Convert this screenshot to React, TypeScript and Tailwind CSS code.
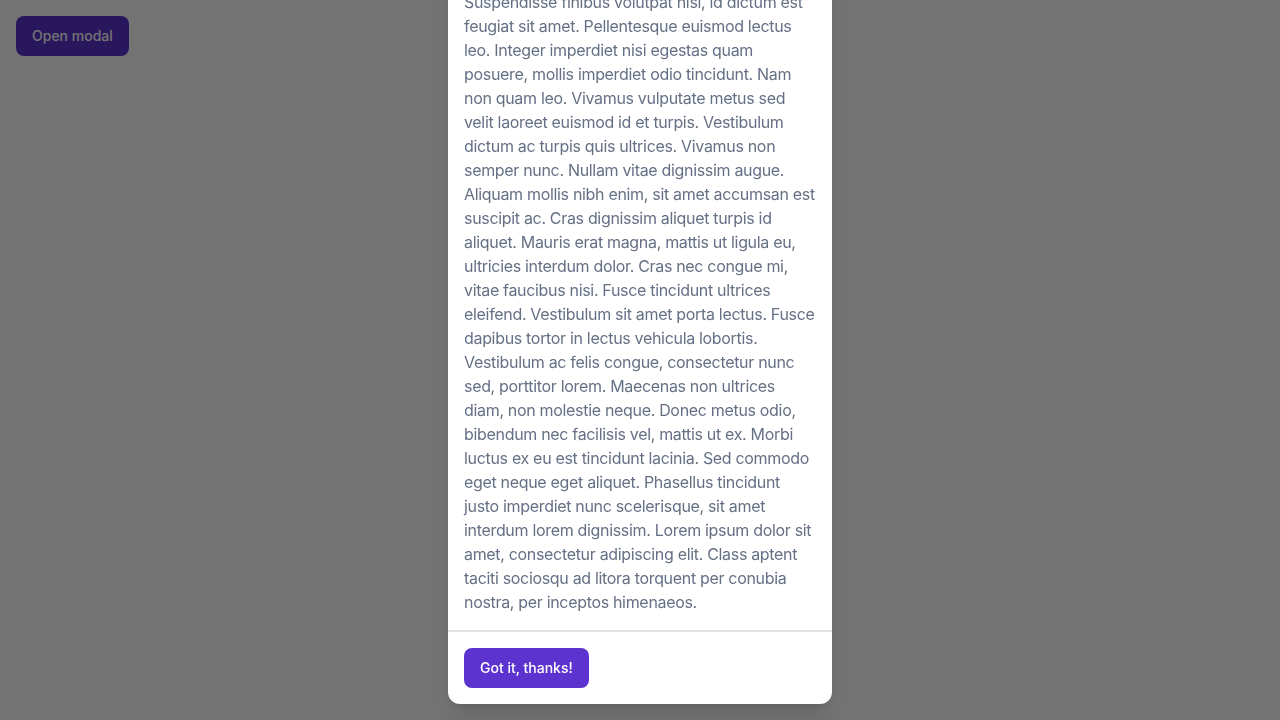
import React from "react";

const INTRO =
  "Lorem ipsum dolor sit amet, consectetur adipiscing elit. Etiam eget sapien sapien. Curabitur in metus urna. In hac habitasse platea dictumst. Phasellus eu sem sapien, sed vestibulum velit. Nam purus nibh, lacinia non faucibus et, pharetra in dolor. Sed iaculis posuere diam ut cursus. Morbi commodo sodales nisi id sodales. Proin consectetur, nisi id commodo porttitor, ligula ipsum pretium tellus, ac condimentum mauris purus eget lorem.";

const BODY =
  "Suspendisse finibus volutpat nisi, id dictum est feugiat sit amet. Pellentesque euismod lectus leo. Integer imperdiet nisi egestas quam posuere, mollis imperdiet odio tincidunt. Nam non quam leo. Vivamus vulputate metus sed velit laoreet euismod id et turpis. Vestibulum dictum ac turpis quis ultrices. Vivamus non semper nunc. Nullam vitae dignissim augue. Aliquam mollis nibh enim, sit amet accumsan est suscipit ac. Cras dignissim aliquet turpis id aliquet. Mauris erat magna, mattis ut ligula eu, ultricies interdum dolor. Cras nec congue mi, vitae faucibus nisi. Fusce tincidunt ultrices eleifend. Vestibulum sit amet porta lectus. Fusce dapibus tortor in lectus vehicula lobortis. Vestibulum ac felis congue, consectetur nunc sed, porttitor lorem. Maecenas non ultrices diam, non molestie neque. Donec metus odio, bibendum nec facilisis vel, mattis ut ex. Morbi luctus ex eu est tincidunt lacinia. Sed commodo eget neque eget aliquet. Phasellus tincidunt justo imperdiet nunc scelerisque, sit amet interdum lorem dignissim. Lorem ipsum dolor sit amet, consectetur adipiscing elit. Class aptent taciti sociosqu ad litora torquent per conubia nostra, per inceptos himenaeos.";

export default function App() {
  return (
    <div className="min-h-screen bg-white font-['Inter',sans-serif]">
      {/* Page */}
      <div className="p-4">
        <button className="h-10 rounded-lg bg-[#5c33cf] px-4 text-sm font-medium text-white">
          Open modal
        </button>
      </div>

      {/* Backdrop */}
      <div className="fixed inset-0 bg-black/55" />

      {/* Dialog */}
      <div className="fixed inset-0 flex items-end justify-center overflow-hidden p-4">
        <div className="w-full max-w-sm rounded-xl bg-white shadow-xl">
          <div className="flex flex-col gap-4 p-4">
            <h2 className="text-lg font-semibold text-gray-900">Terms of service</h2>
            <p className="text-base leading-6 tracking-[-0.02em] text-[#667085]">{INTRO}</p>
            <p className="text-base leading-6 tracking-[-0.02em] text-[#667085]">{BODY}</p>
          </div>
          <div className="border-t-2 border-[#e2e1e8] p-4">
            <button className="h-10 rounded-lg bg-[#5c33cf] px-4 text-sm font-medium text-white">
              Got it, thanks!
            </button>
          </div>
        </div>
      </div>
    </div>
  );
}
